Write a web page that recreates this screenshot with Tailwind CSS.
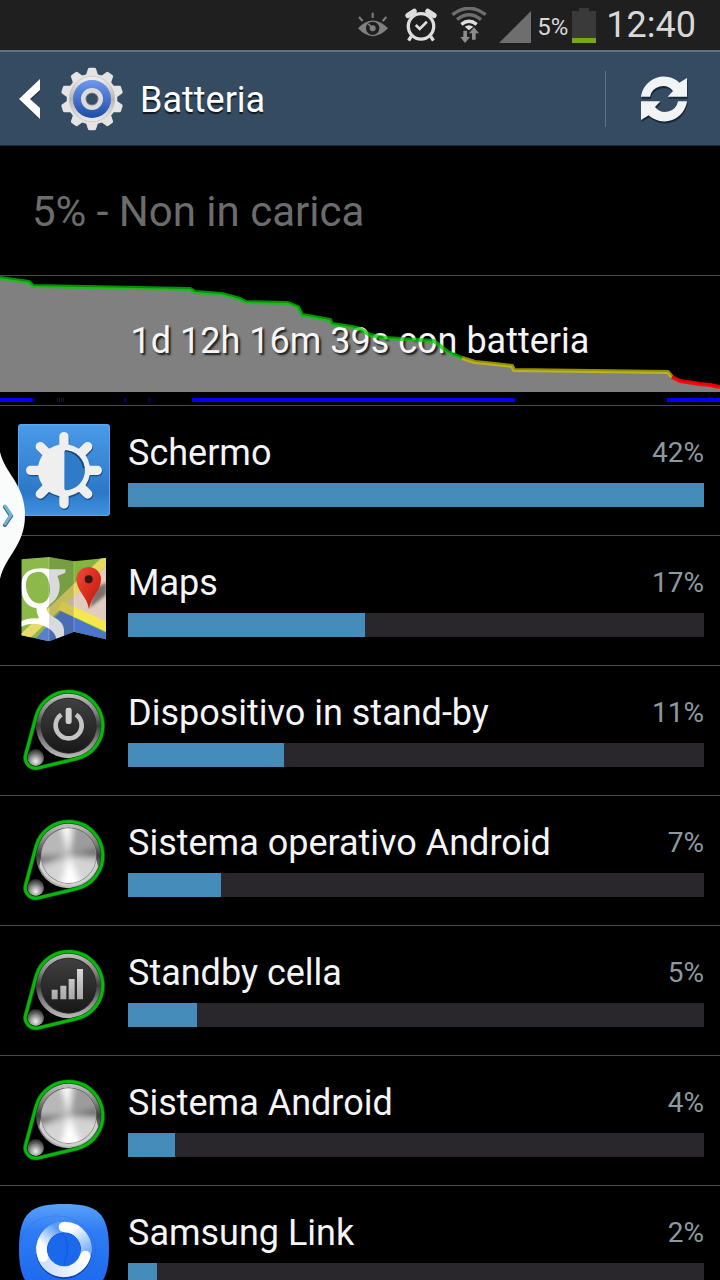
<!DOCTYPE html>
<html lang="it">
<head>
    <meta charset="UTF-8">
    <meta name="viewport" content="width=device-width, initial-scale=1.0">
    <title>Batteria</title>
    <script src="https://cdn.jsdelivr.net/npm/@tailwindcss/browser@4"></script>
</head>
<body class="bg-black text-neutral-100 font-[Roboto,sans-serif]">

    <!-- Shared icon shapes -->
    <svg class="absolute w-0 h-0" aria-hidden="true">
        <defs>
            <linearGradient id="rim" x1="0" y1="0" x2="0" y2="1">
                <stop offset="0" stop-color="#c4c4c4"/>
                <stop offset=".3" stop-color="#808080"/>
                <stop offset=".5" stop-color="#3c3c3c"/>
                <stop offset=".7" stop-color="#7c7c7c"/>
                <stop offset="1" stop-color="#bcbcbc"/>
            </linearGradient>
            <linearGradient id="face" x1="0" y1="0" x2="0" y2="1">
                <stop offset="0" stop-color="#404040"/>
                <stop offset="1" stop-color="#181818"/>
            </linearGradient>
            <linearGradient id="glyph" x1="0" y1="0" x2="0" y2="1">
                <stop offset="0" stop-color="#d8d8d8"/>
                <stop offset="1" stop-color="#a8a8a8"/>
            </linearGradient>
            <radialGradient id="ball" cx=".5" cy=".72" r=".65">
                <stop offset="0" stop-color="#f0f0f0"/>
                <stop offset=".45" stop-color="#a0a0a0"/>
                <stop offset="1" stop-color="#3a3a3a"/>
            </radialGradient>
            <linearGradient id="blueTile" x1="0" y1="0" x2="0" y2="1">
                <stop offset="0" stop-color="#4a9aea"/>
                <stop offset=".75" stop-color="#2c78c8"/>
                <stop offset="1" stop-color="#4292e2"/>
            </linearGradient>
            <linearGradient id="linkTile" x1="0" y1="0" x2="0" y2="1">
                <stop offset="0" stop-color="#5aa2fa"/>
                <stop offset=".3" stop-color="#2f7cf4"/>
                <stop offset="1" stop-color="#1a66ee"/>
            </linearGradient>
            <linearGradient id="fadeRight" gradientUnits="userSpaceOnUse" x1="215" y1="145" x2="258" y2="215">
                <stop offset="0" stop-color="#fff"/>
                <stop offset="1" stop-color="#7db2fc"/>
            </linearGradient>
            <linearGradient id="fadeBottom" gradientUnits="userSpaceOnUse" x1="258" y1="228" x2="135" y2="250">
                <stop offset="0" stop-color="#fff"/>
                <stop offset="1" stop-color="#cfe0fb"/>
            </linearGradient>
            <linearGradient id="fadeLeft" gradientUnits="userSpaceOnUse" x1="126" y1="195" x2="172" y2="145">
                <stop offset="0" stop-color="#fff"/>
                <stop offset="1" stop-color="#5a9cf8"/>
            </linearGradient>
            <linearGradient id="pin" x1="0" y1="0" x2="1" y2="1">
                <stop offset="0" stop-color="#f04a38"/>
                <stop offset="1" stop-color="#c01208"/>
            </linearGradient>
            <filter id="soft" x="-30%" y="-30%" width="160%" height="160%"><feGaussianBlur stdDeviation="9"/></filter>
            <filter id="shade" x="-30%" y="-30%" width="160%" height="160%"><feGaussianBlur stdDeviation="4"/></filter>
            <clipPath id="knobClip"><circle cx="206" cy="167" r="82"/></clipPath>
            <clipPath id="mapClip"><path d="M64 58L147 51L222 64L318 54V298L222 275L147 304L64 286Z"/></clipPath>
        </defs>

        <symbol id="belt" viewBox="54 42 276 276">
            <circle cx="206" cy="167" r="98" fill="url(#rim)"/>
            <circle cx="206" cy="167" r="84" fill="#2a2a2a"/>
            <circle cx="107" cy="263" r="25" fill="url(#ball)"/>
            <path d="M92 254a17 17 0 0 1 30 0q-15-10-30 0" fill="#5c5c5c"/>
            <path d="M77 255L108 140A102 102 0 1 1 230 266L114 294A31.500 31.500 0 0 1 77 255Z" fill="none" stroke="#0a5a0a" stroke-width="13" stroke-linejoin="round"/>
            <path d="M77 255L108 140A102 102 0 1 1 230 266L114 294A31.500 31.500 0 0 1 77 255Z" fill="none" stroke="#08b80c" stroke-width="9" stroke-linejoin="round"/>
        </symbol>

        <symbol id="icon-display" viewBox="54 42 276 276">
            <rect x="54" y="42" width="276" height="276" rx="9" fill="#5aa6f0"/>
            <rect x="57" y="46" width="270" height="269" rx="7" fill="url(#blueTile)"/>
            <g fill="none" stroke-linecap="round">
                <g stroke="#1d4f86" transform="translate(2 4)">
                    <circle cx="192" cy="181" r="68" stroke-width="21"/>
                    <path stroke-width="28" d="M192 80V110M192 252V282M92 181H122M262 181H292M121 110L142 131M242 231L263 252M263 110L242 131M142 231L121 252"/>
                </g>
                <g stroke="#efefef">
                    <circle cx="192" cy="181" r="68" stroke-width="21"/>
                    <path stroke-width="28" d="M192 80V110M192 252V282M92 181H122M262 181H292M121 110L142 131M242 231L263 252M263 110L242 131M142 231L121 252"/>
                </g>
            </g>
            <path d="M193 120A60 60 0 0 0 193 242Z" fill="#efefef"/>
            <path d="M195 121A60 60 0 0 1 195 241Z" fill="#2f7bc8"/>
            <path d="M195 123A58 58 0 0 1 251 174" fill="none" stroke="#1c4474" stroke-width="5"/>
        </symbol>

        <symbol id="icon-maps" viewBox="54 42 276 276">
            <g clip-path="url(#mapClip)">
                <rect x="60" y="45" width="262" height="262" fill="#84b43c"/>
                <path d="M330 70L196 188L330 255Z" fill="#e2ccc0"/>
                <path d="M100 304L182 214L330 284V310H100Z" fill="#4a76cc"/>
                <path d="M335 44L70 294" stroke="#e6d860" stroke-width="28"/>
                <path d="M180 196L335 268" stroke="#f6e650" stroke-width="28"/>
                <path d="M196 88H150Q130 82 105 86C72 92 62 115 64 148C66 182 84 202 108 204C112 204 108 214 112 222L118 236Q82 232 60 246V262Q88 246 122 254C150 264 172 278 170 310H192V270C190 240 162 236 146 220C134 206 142 200 156 188C182 168 184 132 172 108L196 98ZM110 96C136 92 148 116 150 146C150 172 140 188 122 190C98 192 82 172 78 142C76 114 88 98 110 96Z" fill="#fff" fill-rule="evenodd"/>
                <path d="M64 58L147 51V304L64 286Z" fill="#fff" fill-opacity=".08"/>
                <path d="M147 51L222 64V275L147 304Z" fill="#445" fill-opacity=".2"/>
                <path d="M147 51V304M222 64V275" stroke="#fff" stroke-opacity=".4" stroke-width="2"/>
                <path d="M267 205L285 145Q312 128 322 130L318 165Z" fill="#000" fill-opacity=".45" filter="url(#shade)"/>
            </g>
            <path d="M267 208C262 170 229 152 229 118A37 37 0 0 1 303 118C303 152 272 170 267 208Z" fill="url(#pin)"/>
            <circle cx="266" cy="118" r="12" fill="#3a1410"/>
        </symbol>

        <symbol id="icon-standby" viewBox="54 42 276 276">
            <use href="#belt" x="54" y="42" width="276" height="276"/>
            <circle cx="206" cy="167" r="81" fill="url(#face)"/>
            <path d="M184 134A39 39 0 1 0 228 134" fill="none" stroke="#c4c4c4" stroke-width="14"/>
            <rect x="197" y="113" width="18" height="49" rx="7" fill="#cfcfcf"/>
        </symbol>

        <symbol id="icon-android" viewBox="54 42 276 276">
            <use href="#belt" x="54" y="42" width="276" height="276"/>
            <path d="M118 200A95 95 0 0 0 294 200L280 140H130Z" fill="#cfcfcf"/>
            <circle cx="206" cy="167" r="84" fill="#7a7a7a"/>
            <g clip-path="url(#knobClip)">
                <circle cx="206" cy="170" r="85" fill="#b8b8b8"/>
                <g filter="url(#soft)">
                    <path d="M206 167L178 60H216Z" fill="#fff"/>
                    <path d="M206 167L235 60L310 100L310 140Z" fill="#9c9c9c"/>
                    <path d="M206 167L320 135V170Z" fill="#6c6c6c"/>
                    <path d="M206 167L90 168V200Z" fill="#747474"/>
                    <path d="M206 167L90 225L140 280L270 280L320 190Z" fill="#d4d4d4"/>
                    <path d="M206 167L175 280H255Z" fill="#fff"/>
                </g>
            </g>
        </symbol>

        <symbol id="icon-cell" viewBox="54 42 276 276">
            <use href="#belt" x="54" y="42" width="276" height="276"/>
            <circle cx="206" cy="167" r="81" fill="url(#face)"/>
            <path d="M155 179h18v29h-18zM181 167h18v41h-18zM206 147h18v61h-18zM231 117h18v91h-18z" fill="url(#glyph)"/>
        </symbol>

        <symbol id="icon-link" viewBox="54 72 276 276">
            <path d="M192 72C290 72 327 96 327 207S290 342 192 342S57 318 57 207S94 72 192 72Z" fill="url(#linkTile)"/>
            <path d="M60 185C80 110 175 85 240 130C300 165 300 250 240 300" fill="none" stroke="#1558d8" stroke-opacity=".35" stroke-width="2"/>
            <circle cx="192" cy="212" r="67" fill="none" stroke="#0c3fa8" stroke-width="34"/>
            <circle cx="192" cy="208" r="67" fill="none" stroke="#7db2fc" stroke-width="32"/>
            <circle cx="192" cy="208" r="50" fill="#1a68ec"/>
            <path d="M185 158Q216 185 192 256" fill="none" stroke="#1252c8" stroke-width="2"/>
            <g fill="none" stroke-width="32">
                <path d="M130 234A67 67 0 0 1 192 141" stroke="url(#fadeLeft)"/>
                <path d="M192 141A67 67 0 0 1 256 228" stroke="url(#fadeRight)"/>
                <path d="M256 228A67 67 0 0 1 130 234" stroke="url(#fadeBottom)"/>
            </g>
            <g fill="#fff">
                <circle cx="191" cy="141" r="15"/>
                <circle cx="256" cy="227" r="15"/>
                <circle cx="129" cy="231" r="15"/>
            </g>
        </symbol>
    </svg>

    <div class="relative flex flex-col h-screen overflow-hidden">

        <!-- Status bar -->
        <div class="flex items-center justify-end h-[50px] shrink-0 pr-6 bg-[#1f1f1f] text-[#d8d8d8]">
            <svg class="w-8 h-[26px]" viewBox="45 36 96 78" fill="none" stroke="#808080">
                <path d="M92 38V54M51 51L62 63M133 51L122 63" stroke-width="6"/>
                <path d="M48 85Q92 38 138 85Q92 132 48 85Z" fill="#808080" stroke="none"/>
                <circle cx="92" cy="85" r="20" fill="#1f1f1f" stroke="none"/>
                <circle cx="92" cy="85" r="9" fill="#808080" stroke="none"/>
                <path d="M79 72L92 85" stroke-width="5"/>
            </svg>
            <svg class="w-8 h-9 ml-4" viewBox="190 21 98 108" fill="none" stroke="#dedede">
                <circle cx="239" cy="79" r="39" stroke-width="10"/>
                <path d="M223 75L235 87L257 65" stroke-width="8"/>
                <path d="M209 110L201 123M269 110L277 123" stroke-width="10"/>
                <path d="M199 46L218 33M279 46L260 33" stroke-width="16" stroke-linecap="round"/>
            </svg>
            <svg class="w-9 h-9 ml-3.5" viewBox="330 19 108 108" fill="none">
                <path d="M334 42Q384 3 434 42" stroke="#6e6e6e" stroke-width="10"/>
                <path d="M348 57Q384 28 420 57" stroke="#6e6e6e" stroke-width="10"/>
                <path d="M361 71Q384 53 407 71" stroke="#dedede" stroke-width="10"/>
                <path d="M371 78Q384 69 397 78L384 89Z" fill="#dedede"/>
                <path d="M367 90H378V109H387L372 127L358 109H367ZM393 117H404V98H414L399 80L384 98H393Z" fill="#8c8c8c"/>
            </svg>
            <svg class="w-8 h-8 ml-3 mt-1" viewBox="0 0 32 32"><path d="M0 32H32V0Z" fill="#6e6e6e"/></svg>
            <span class="ml-1.5 mt-1 text-2xl">5%</span>
            <svg class="w-6 h-9 ml-1" viewBox="0 0 24 36">
                <path d="M7 1H17V4H24V36H0V4H7Z" fill="#3a3a3a"/>
                <path d="M0 31H24V36H0Z" fill="#76a81c"/>
            </svg>
            <span class="ml-2.5 text-4xl">12:40</span>
        </div>

        <!-- Action bar -->
        <header class="flex items-center h-24 shrink-0 border-t-2 border-b border-t-[#5b7389] border-b-[#1c2834] bg-[#344b61]">
            <a href="#" class="flex items-center ml-[18px]" aria-label="Indietro">
                <svg class="w-6 h-10" viewBox="0 0 24 40">
                    <path d="M22 2V13L13 21L22 30V41L1 21Z" fill="#1c2a38" fill-opacity=".6"/>
                    <path d="M22 0V11L12 20L22 29V40L1 20Z" fill="#fff"/>
                </svg>
                <svg class="w-16 h-16 ml-[18px]" viewBox="-96 -96 192 192">
                    <defs>
                        <linearGradient id="silver" x1="0" y1="0" x2="0" y2="1">
                            <stop offset="0" stop-color="#f2f2f2"/>
                            <stop offset=".5" stop-color="#b4b4b4"/>
                            <stop offset="1" stop-color="#ededed"/>
                        </linearGradient>
                        <linearGradient id="hub" x1="0" y1="0" x2="0" y2="1">
                            <stop offset="0" stop-color="#6f98f0"/>
                            <stop offset="1" stop-color="#1d4da6"/>
                        </linearGradient>
                        <path id="tooth" d="M-20 -66L-12 -91Q-11 -94 -7 -94H7Q11 -94 12 -91L20 -66Z"/>
                    </defs>
                    <g fill="#e4e4e4">
                        <use href="#tooth"/>
                        <use href="#tooth" transform="rotate(36)"/>
                        <use href="#tooth" transform="rotate(72)"/>
                        <use href="#tooth" transform="rotate(108)"/>
                        <use href="#tooth" transform="rotate(144)"/>
                        <use href="#tooth" transform="rotate(180)"/>
                        <use href="#tooth" transform="rotate(216)"/>
                        <use href="#tooth" transform="rotate(252)"/>
                        <use href="#tooth" transform="rotate(288)"/>
                        <use href="#tooth" transform="rotate(324)"/>
                        <circle r="76"/>
                    </g>
                    <circle r="68" fill="url(#silver)" stroke="#bcbcbc" stroke-width="2"/>
                    <circle r="57" fill="url(#hub)"/>
                    <circle r="26" fill="#344b61" stroke="#dcdcdc" stroke-width="14"/>
                    <circle r="18" fill="#344b61" stroke="#9aa0a8" stroke-width="2"/>
                </svg>
            </a>
            <h1 class="flex-1 pt-0.5 ml-4 text-4xl text-white text-shadow-[0_2px_1px_rgb(0_0_0/0.7)]">Batteria</h1>
            <button class="flex items-center h-14 pl-8 pr-[30px] border-l border-[#5f7488]" aria-label="Aggiorna">
                <svg class="w-[52px] h-[52px]" viewBox="144 67 156 156">
                    <defs>
                        <path id="turn" d="M153 138A69 69 0 0 1 268 96L291 82V138H233L249 121A39 39 0 0 0 180 138Z"/>
                    </defs>
                    <g fill="#101c28" fill-opacity=".75" transform="translate(2 6)">
                        <use href="#turn"/>
                        <use href="#turn" transform="rotate(180 222 145)"/>
                    </g>
                    <g fill="#f2f3f5">
                        <use href="#turn"/>
                        <use href="#turn" transform="rotate(180 222 145)"/>
                    </g>
                </svg>
            </button>
        </header>

        <p class="flex items-center h-[130px] shrink-0 px-8 pt-0.5 border-b border-[#4a4a4a] text-[42px] text-[#6c6c6c]">5% - Non in carica</p>

        <!-- Discharge chart: area, label, then the level line on top -->
        <div class="grid h-[130px] shrink-0 border-b border-[#4a4a4a] *:col-start-1 *:row-start-1">
            <svg class="w-full h-[129px]" viewBox="0 276 720 129" preserveAspectRatio="none">
                <path fill="#808080" d="M0 278L29 282L33 286L190 289L195 292L222 294L240 299L246 302L288 303L298 307L302 315L314 317L330 320L332 324L352 327L360 329L370 335L385 338L434 341L448 352L462 358L475 362L495 364L512 366L514 370L668 372L672 377L680 381L700 384L710 385L720 387V392H0Z"/>
                <path fill="#0000f4" d="M0 398H33V402H0ZM192 398H515V402H192ZM667 398H720V402H667Z"/>
                <path fill="#000090" d="M34 398h1v4h-1zM124 398h2v4h-2zM148 398h1v4h-1zM150 398h1v4h-1z"/>
                <path fill="#181830" d="M57 398h1v4h-1zM59 398h1v4h-1zM61 398h1v4h-1zM63 398h1v4h-1z"/>
            </svg>
            <p class="self-center text-center text-4xl text-shadow-[2px_2px_2px_rgb(0_0_0/0.8)]">1d 12h 16m 39s con batteria</p>
            <svg class="w-full h-[129px]" viewBox="0 276 720 129" preserveAspectRatio="none" fill="none" stroke-width="4" stroke-opacity=".72" stroke-linejoin="round">
                <path stroke="#00cc00" d="M0 278L29 282L33 286L190 289L195 292L222 294L240 299L246 302L288 303L298 307L302 315L314 317L330 320L332 324L352 327L360 329L370 335L385 338L434 341L448 352L462 358"/>
                <path stroke="#d0c800" d="M462 358L475 362L495 364L512 366L514 370L668 372L672 377"/>
                <path stroke="#ff0000" stroke-opacity=".9" d="M672 377L680 381L700 384L710 385L720 387"/>
            </svg>
        </div>

        <ul id="usage" class="flex-1 overflow-hidden"></ul>

        <!-- Side panel handle -->
        <button class="absolute left-0 top-[452px]" aria-label="Apri pannello">
            <svg class="w-[26px] h-32" viewBox="0 0 26 128">
                <path d="M0 0C5 22 25 32 25 63S5 104 0 127Z" fill="#fafcfc"/>
                <path d="M5 55L11 64L5 73" fill="none" stroke="#3c5f74" stroke-width="4" stroke-linecap="round"/>
                <path d="M5 54L11 63L5 72" fill="none" stroke="#6fb6d8" stroke-width="3" stroke-linecap="round"/>
            </svg>
        </button>
    </div>

    <script>
        // bar is the width relative to the biggest consumer
        const apps = [
            { name: "Schermo", percent: 42, bar: 100, icon: "icon-display" },
            { name: "Maps", percent: 17, bar: 41.1, icon: "icon-maps" },
            { name: "Dispositivo in stand-by", percent: 11, bar: 27.1, icon: "icon-standby" },
            { name: "Sistema operativo Android", percent: 7, bar: 16.1, icon: "icon-android" },
            { name: "Standby cella", percent: 5, bar: 12, icon: "icon-cell" },
            { name: "Sistema Android", percent: 4, bar: 8.1, icon: "icon-android" },
            { name: "Samsung Link", percent: 2, bar: 5.1, icon: "icon-link" },
        ];

        const usage = document.getElementById('usage');

        apps.forEach(app => {
            const row = document.createElement('li');
            row.innerHTML = `
                <a href="#" class="flex items-center h-[130px] pl-[18px] pr-4 pb-0.5 border-b border-[#4a4a4a]">
                    <svg class="w-[92px] h-[92px] shrink-0"><use href="#${app.icon}"/></svg>
                    <div class="flex-1 ml-[18px] pb-1">
                        <div class="flex items-center justify-between h-12 mb-1.5">
                            <span class="text-4xl">${app.name}</span>
                            <span class="text-[28px] text-[#8c9aa0]">${app.percent}%</span>
                        </div>
                        <div class="h-6 bg-[#29262c]">
                            <div class="h-full bg-[#468cba]" style="width: ${app.bar}%"></div>
                        </div>
                    </div>
                </a>
            `;
            usage.appendChild(row);
        });
    </script>

</body>
</html>
